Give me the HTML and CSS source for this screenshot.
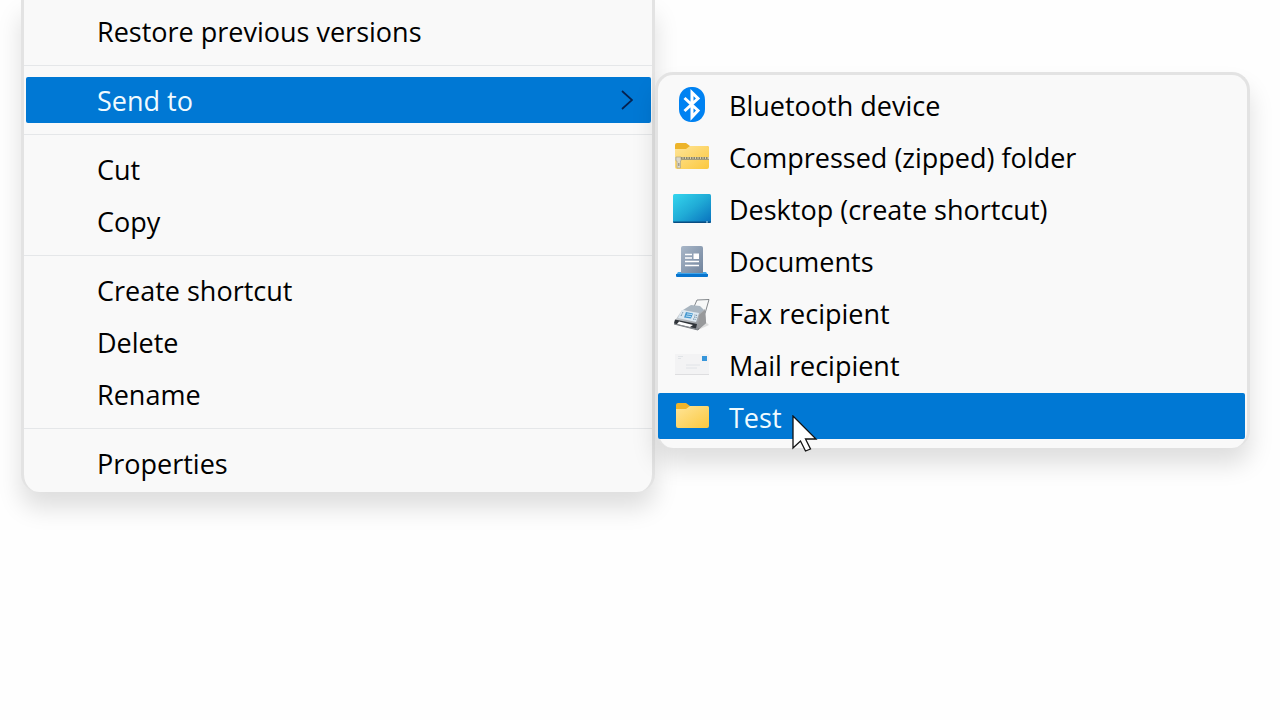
FILE: index.html
```html
<!DOCTYPE html>
<html lang="en">
<head>
<meta charset="utf-8">
<meta name="viewport" content="width=device-width, initial-scale=1">
<title>Context menu</title>
<link rel="stylesheet" href="styles.css">
</head>
<body>
<main class="desktop">
  <ul class="menu menu-main" role="menu">
    <li class="row"><button class="item">Restore previous versions</button></li>
    <li class="separator" role="separator"></li>
    <li class="row">
      <button class="item selected" aria-haspopup="menu">Send to
        <svg class="chevron" viewBox="0 0 12 20"><path d="M1 1l10 9-10 9" fill="none" stroke="#06224f" stroke-width="1.7"/></svg>
      </button>
    </li>
    <li class="separator" role="separator"></li>
    <li class="row"><button class="item">Cut</button></li>
    <li class="row"><button class="item">Copy</button></li>
    <li class="separator" role="separator"></li>
    <li class="row"><button class="item">Create shortcut</button></li>
    <li class="row"><button class="item">Delete</button></li>
    <li class="row"><button class="item">Rename</button></li>
    <li class="separator" role="separator"></li>
    <li class="row"><button class="item">Properties</button></li>
  </ul>

  <ul class="menu menu-sub" role="menu">
    <li class="row"><button class="item">
      <svg class="icon" viewBox="0 0 38 38">
        <rect x="6" y="2" width="26" height="35" rx="12" ry="13" fill="#0082f2"/>
        <path d="M11.500 13l13.500 12.500-6 6.500V7.500l6 6-13.500 12.500" fill="none" stroke="#fff" stroke-width="3"/>
      </svg>Bluetooth device</button></li>
    <li class="row"><button class="item">
      <svg class="icon" viewBox="0 0 38 38">
        <defs><linearGradient id="folder" x1="0" y1="0" x2="1" y2="1"><stop offset="0" stop-color="#ffe598"/><stop offset="1" stop-color="#fbc83f"/></linearGradient></defs>
        <path d="M2 8q0-2 2-2h9l4 3h17q2 0 2 2v8H2z" fill="#edb42a"/>
        <path d="M2 12h11l4-3h17q2 0 2 2v19q0 2-2 2H4q-2 0-2-2z" fill="url(#folder)"/>
        <path d="M2 21.500h34" stroke="#d8d0ae" stroke-width="3"/>
        <path d="M8 21h27" stroke="#8a8468" stroke-width="2" stroke-dasharray="1.500 1"/>
        <path d="M3 22.500h33" stroke="#a29a78" stroke-width="1"/>
        <path d="M3 20h5v4H7.500v7H4v-7H3z" fill="#dcd8c8" stroke="#a79d7c" stroke-width=".6"/>
        <path d="M5 26h1.500v3H5z" fill="#a39f92"/>
      </svg>Compressed (zipped) folder</button></li>
    <li class="row"><button class="item">
      <svg class="icon" viewBox="0 0 38 38">
        <defs><linearGradient id="screen" x1="0" y1="0" x2="1" y2="1"><stop offset="0" stop-color="#35d6ee"/><stop offset=".5" stop-color="#20abd6"/><stop offset="1" stop-color="#0870bd"/></linearGradient></defs>
        <rect y="5" width="38" height="29" rx="1.500" fill="url(#screen)"/>
        <path d="M0 32.500h38q0 1.500-1.500 1.500h-35Q0 34 0 32.500z" fill="#0a4d82"/>
        <path d="M33 33h2" stroke="#b8e5f5"/>
      </svg>Desktop (create shortcut)</button></li>
    <li class="row"><button class="item">
      <svg class="icon" viewBox="0 0 38 38">
        <defs><linearGradient id="paper" x1="0" y1="0" x2="1" y2="1"><stop offset="0" stop-color="#a9b7c8"/><stop offset="1" stop-color="#71849d"/></linearGradient></defs>
        <path d="M5 31h28l2 3H3z" fill="#42a6e9"/>
        <path d="M8 32V7q0-2 2-2h18q2 0 2 2v25z" fill="url(#paper)"/>
        <path d="M3 33h32v2q0 1-1 1H4q-1 0-1-1z" fill="#0875cf"/>
        <path d="M12 13.500h7M12 17h7M12 20.500h14M12 24.500h14" stroke="#fff" stroke-width="1.600"/>
        <path d="M20.500 12.500h5.500v5.500h-5.500z" fill="#fff"/>
      </svg>Documents</button></li>
    <li class="row"><button class="item">
      <svg class="icon" viewBox="0 0 38 38">
        <defs><linearGradient id="fax" x1="0" y1="0" x2="1" y2="1"><stop offset="0" stop-color="#dfe4e9"/><stop offset="1" stop-color="#7d8186"/></linearGradient></defs>
        <path d="M25 37l11-5-5-5z" fill="#ddd"/>
        <path d="M20 16l4-9 12-.5-4 14-5 3z" fill="#f7f8f8" stroke="#666b70" stroke-width=".8"/>
        <path d="M10 17l8-5 9 1 5 5-6 5z" fill="#a9b5c0"/>
        <path d="M1 29l8-12 17 3 6-4 1 14-8 7-24-6z" fill="url(#fax)"/>
        <path d="M26 22l6-5 1 13-8 7z" fill="#98999b"/>
        <path d="M9 17l17 3-3 9-18-4z" fill="#dce8f1"/>
        <path d="M13 19l7 1.500-2 5-7-1z" fill="#4899cf"/>
        <path d="M14 21l5 .5M13 23l5 .7" stroke="#d5efff" stroke-width=".8"/>
        <path d="M21.500 22l3 .5M21 24l3 .5M20 26l3 .5M8 23l2-4" stroke="#63849c" stroke-width="1" stroke-dasharray="1 .6"/>
        <path d="M2 26.500l22 4.500-1 4.500-22-5z" fill="#303439"/>
        <path d="M6 28.500l14 3.500-3 2-13-3z" fill="#fff"/>
        <path d="M1 31l24 6 1-2" fill="none" stroke="#777b80"/>
      </svg>Fax recipient</button></li>
    <li class="row"><button class="item">
      <svg class="icon" viewBox="0 0 38 38">
        <rect x="2" y="9" width="34" height="21" fill="#f3f3f4"/>
        <path d="M2 29.500h34" stroke="#dedee0"/>
        <path d="M5 11.500h5M5 13.500h3M13 20h14M13 23h11" stroke="#dfe2e5" stroke-width=".9"/>
        <path d="M29 11h5v5h-5z" fill="#3796da"/>
      </svg>Mail recipient</button></li>
    <li class="row pointed">
      <button class="item selected">
      <svg class="icon" viewBox="0 0 38 38">
        <path d="M3 8q0-2 2-2h8l4 3h17q2 0 2 2v8H3z" fill="#f0b429"/>
        <path d="M3 12h10l4-3h17q2 0 2 2v18q0 2-2 2H5q-2 0-2-2z" fill="url(#folder)"/>
      </svg>Test</button>
      <svg class="cursor" viewBox="0 0 26 38"><path d="M1 1v32l7.500-7 5 10 5-2-5-10H24z" fill="#fff" stroke="#111" stroke-width="1.300"/></svg>
    </li>
  </ul>
</main>
</body>
</html>
```
FILE: styles.css
```css
* {
  box-sizing: border-box;
}

body {
  margin: 0;
  background: #fefefe;
  color: #000;
  font-family: "Open Sans", "Noto Sans", sans-serif;
  font-size: 27px;
  line-height: 40px;
}

.desktop {
  display: grid;
  grid-template-columns: minmax(0, 634fr) minmax(0, 595fr);
  align-items: start;
  min-height: 100vh;
  padding: 0 30px 0 21px;
}

.menu {
  list-style: none;
  margin: 0;
  background: #f9f9f9;
  border: 3px solid #e3e3e3;
  border-bottom: 0;
  border-radius: 18px;
  box-shadow: 0 16px 24px rgba(0, 0, 0, 0.13);
}

.menu-main {
  padding: 5px 0 3px;
  border-top: 0;
  border-top-left-radius: 0;
  border-top-right-radius: 0;
}

.menu-sub {
  margin-top: 72px;
  padding: 3px 2px 6px 0;
}

.row {
  padding: 3px 0;
}

.menu-main .row {
  padding: 3px 1px 3px 2px;
}

.item {
  display: flex;
  align-items: center;
  width: 100%;
  height: 46px;
  padding: 4px 15px 0;
  border: 0;
  border-radius: 2px;
  background: transparent;
  color: inherit;
  font: inherit;
  text-align: left;
  white-space: nowrap;
}

.menu-main .item {
  justify-content: space-between;
  padding: 2px 18px 0 71px;
}

.menu-sub .item {
  gap: 18px;
}

.item.selected {
  background: #0078d4;
  color: #f0fbff;
}

.separator {
  height: 17px;
  padding: 8px 0;
}

.separator::before {
  content: "";
  display: block;
  height: 1px;
  background: #e5e7e9;
}

.chevron {
  width: 12px;
  height: 20px;
  margin-bottom: 2px;
}

.icon {
  flex: none;
  width: 38px;
  height: 38px;
  margin-bottom: 4px;
}

.pointed {
  position: relative;
}

.cursor {
  position: absolute;
  left: 134px;
  top: 25px;
  width: 26px;
  height: 38px;
}
```
